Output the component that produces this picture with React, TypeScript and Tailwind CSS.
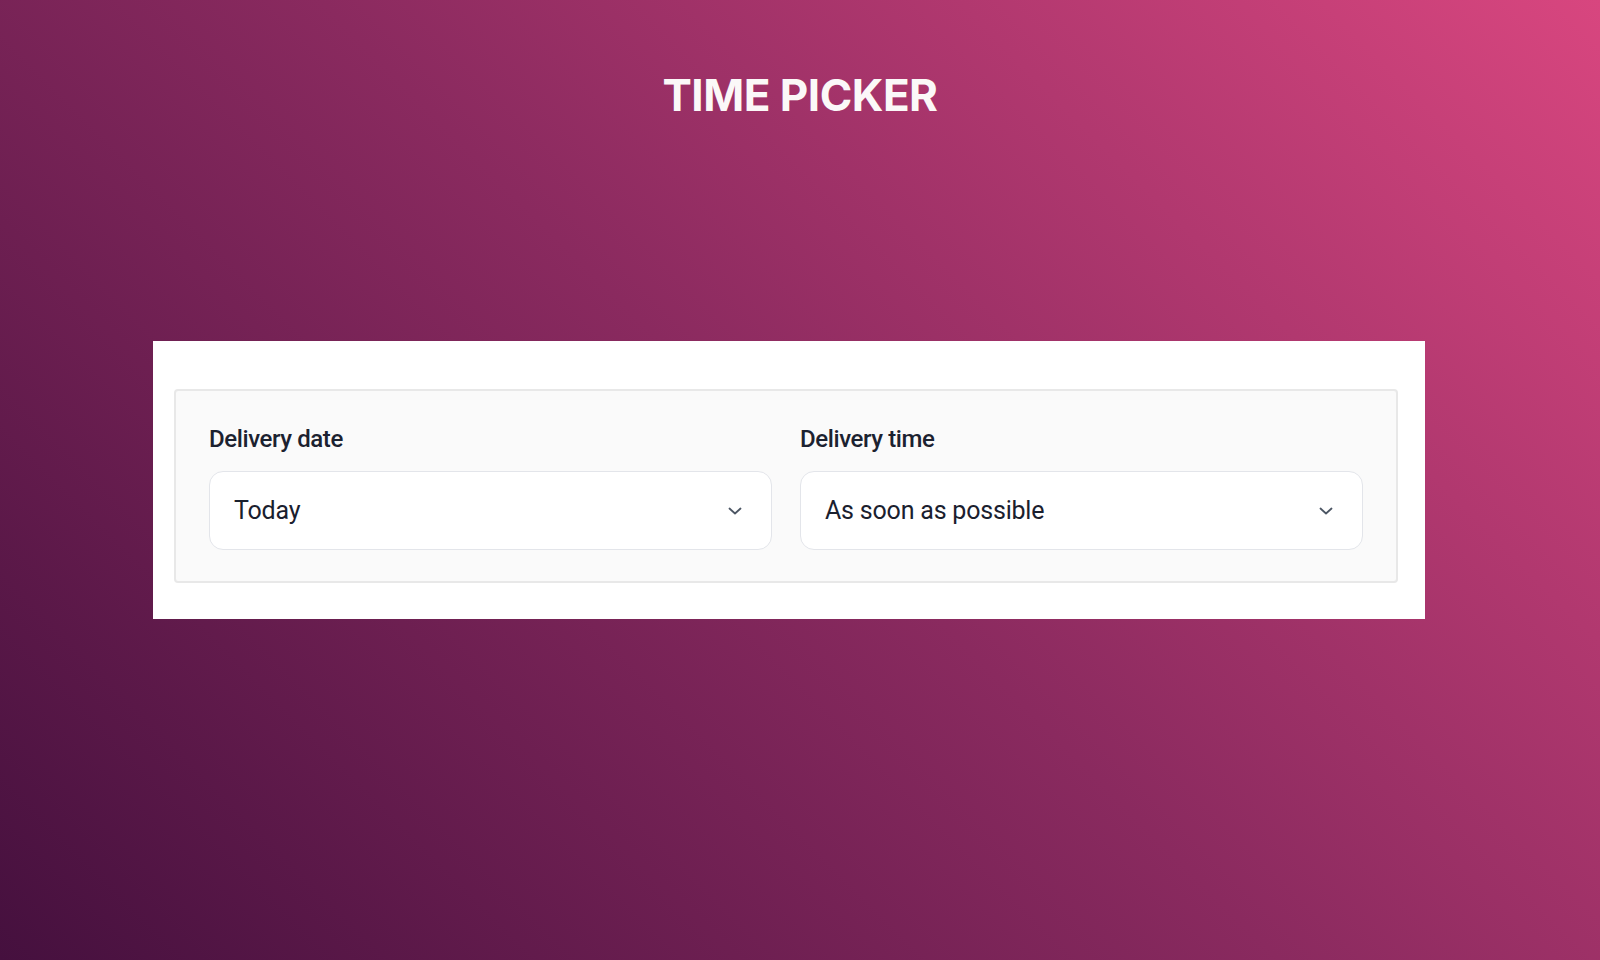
import React from 'react';

const Chevron = () => (
  <svg width="14" height="8" viewBox="0 0 14 8" fill="none" className="shrink-0">
    <path d="M1.5 1.5 7 6.5l5.5-5" stroke="#4b5563" strokeWidth="1.8" strokeLinecap="round" strokeLinejoin="round" />
  </svg>
);

const SelectField = ({ label, value }: { label: string; value: string }) => (
  <div className="flex flex-col flex-1">
    <label className="text-[24px] font-medium text-[#1c2230] leading-none tracking-[-0.4px]">{label}</label>
    <div className="mt-[20px] h-[79px] rounded-[14px] border border-[#e3e5ea] bg-white flex items-center justify-between pl-[24px] pr-[29px]">
      <span className="text-[25px] text-[#1a202e] tracking-[-0.2px]">{value}</span>
      <Chevron />
    </div>
  </div>
);

export default function App() {
  return (
    <div className="min-h-screen w-full bg-[linear-gradient(45deg,#45103e,#8a2a5f,#d8467f)] flex flex-col font-['Roboto',sans-serif]">
      <h1 className="mt-[73px] self-center text-[44px] font-bold text-[#fbf8f8] leading-none tracking-[-0.5px] font-['Inter',sans-serif]">
        TIME PICKER
      </h1>
      <div className="mt-[224px] ml-[153px] w-[1272px] bg-white pt-[48px] pb-[36px] pl-[21px] pr-[27px]">
        <div className="rounded-[4px] border-2 border-[#e8e8e8] bg-[#fafafa] pt-[36px] pb-[31px] px-[33px] flex gap-[28px]">
          <SelectField label="Delivery date" value="Today" />
          <SelectField label="Delivery time" value="As soon as possible" />
        </div>
      </div>
    </div>
  );
}
